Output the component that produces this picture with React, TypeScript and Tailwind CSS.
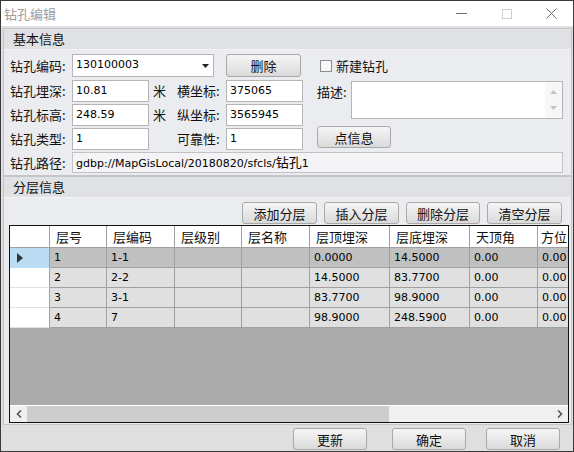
import React from 'react'

const cjk = "font-['Noto_Sans_CJK_SC',sans-serif]"
const lat = "font-['DejaVu_Sans','Noto_Sans_CJK_SC',sans-serif]"

const cols = [57, 68, 67, 68, 80, 80, 68, 80]
const heads = ['层号', '层编码', '层级别', '层名称', '层顶埋深', '层底埋深', '天顶角', '方位']
const rows = [
  ['1', '1-1', '', '', '0.0000', '14.5000', '0.00', '0.00'],
  ['2', '2-2', '', '', '14.5000', '83.7700', '0.00', '0.00'],
  ['3', '3-1', '', '', '83.7700', '98.9000', '0.00', '0.00'],
  ['4', '7', '', '', '98.9000', '248.5900', '0.00', '0.00'],
]

function Btn({ label, className = '' }: { label: string; className?: string }) {
  return (
    <div
      className={`flex shrink-0 items-center justify-center rounded-[3px] border border-[#a9a9a9] bg-linear-to-b from-[#f6f6f6] to-[#dadada] text-[13px] leading-none text-[#111] ${cjk} ${className}`}
    >
      {label}
    </div>
  )
}

function Label({ text, w }: { text: string; w: string }) {
  return <div className={`${w} shrink-0 text-[13px] leading-[22px] text-[#111] ${cjk}`}>{text}</div>
}

function Field({ value, w }: { value: string; w: string }) {
  return (
    <div className={`${w} h-[22px] shrink-0 flex items-center border border-[#b5b5b5] bg-white pl-[3px] text-[11px] text-black ${lat}`}>
      {value}
    </div>
  )
}

function Group({ title, className = '', children }: { title: string; className?: string; children: React.ReactNode }) {
  return (
    <div className={`ml-[2px] mr-[1px] flex flex-col border border-[#c4c5cb] bg-[#ebecef] ${className}`}>
      <div className={`h-[21px] shrink-0 border-b border-[#f4f4f6] bg-[#e0e1e5] pl-[9px] text-[13px] leading-[20px] text-[#111] ${cjk}`}>
        {title}
      </div>
      {children}
    </div>
  )
}

function Chevron({ right = false }: { right?: boolean }) {
  return (
    <svg width="6" height="8" viewBox="0 0 6 8">
      <path d={right ? 'M1 0.5 L4.5 4 L1 7.5' : 'M5 0.5 L1.5 4 L5 7.5'} stroke="#555" strokeWidth="1.6" fill="none" />
    </svg>
  )
}

export default function App() {
  return (
    <div className="flex h-[452px] w-[574px] flex-col overflow-hidden border border-[#3a3a3a] bg-[#dfdfdf]">
      {/* title bar */}
      <div className="flex h-[25px] shrink-0 items-center bg-white">
        <span className={`pl-[3px] text-[13px] leading-none text-[#9c9c9c] ${cjk}`}>钻孔编辑</span>
        <div className="ml-auto flex h-full">
          <div className="flex w-[45px] items-center justify-center">
            <div className="h-px w-[11px] bg-[#6e6e6e]" />
          </div>
          <div className="flex w-[45px] items-center justify-center">
            <div className="h-[10px] w-[10px] border border-[#cfcfcf]" />
          </div>
          <div className="flex w-[44px] items-center justify-center">
            <svg width="11" height="11" viewBox="0 0 11 11">
              <path d="M0.5 0.5 L10.5 10.5 M10.5 0.5 L0.5 10.5" stroke="#6e6e6e" strokeWidth="1" />
            </svg>
          </div>
        </div>
      </div>

      {/* 基本信息 */}
      <Group title="基本信息" className="mt-[2px] shrink-0">
        <div className="flex flex-col pb-[2px] pl-[6px] pr-[8px] pt-[4px]">
          <div className="flex">
            <div className="flex w-[293px] shrink-0 flex-col">
              <div className="flex h-[23px] items-center">
                <Label text="钻孔编码:" w="w-[62px]" />
                <div className={`flex h-[23px] w-[142px] items-center border border-[#b5b5b5] bg-white pl-[3px] text-[11px] text-black ${lat}`}>
                  130100003
                  <svg className="ml-auto mr-[4px]" width="7" height="4" viewBox="0 0 7 4">
                    <path d="M0 0 H7 L3.5 4 Z" fill="#222" />
                  </svg>
                </div>
                <Btn label="删除" className="ml-[12px] h-[23px] w-[75px]" />
              </div>
              <div className="mt-[3px] flex">
                <Label text="钻孔埋深:" w="w-[62px]" />
                <Field value="10.81" w="w-[77px]" />
                <Label text="米" w="ml-[4px] w-[24px]" />
                <Label text="横坐标:" w="w-[49px]" />
                <Field value="375065" w="w-[77px]" />
              </div>
              <div className="mt-[2px] flex">
                <Label text="钻孔标高:" w="w-[62px]" />
                <Field value="248.59" w="w-[77px]" />
                <Label text="米" w="ml-[4px] w-[24px]" />
                <Label text="纵坐标:" w="w-[49px]" />
                <Field value="3565945" w="w-[77px]" />
              </div>
              <div className="mt-[2px] flex">
                <Label text="钻孔类型:" w="w-[62px]" />
                <Field value="1" w="w-[77px]" />
                <div className="ml-[4px] w-[24px]" />
                <Label text="可靠性:" w="w-[49px]" />
                <Field value="1" w="w-[77px]" />
              </div>
            </div>

            <div className="ml-[14px] flex flex-1 flex-col">
              <div className="flex h-[23px] items-center pl-[3px]">
                <div className="h-[12px] w-[12px] border border-[#8c8c8c] bg-[#f7f7f7]" />
                <span className={`ml-[4px] text-[13px] leading-none text-[#111] ${cjk}`}>新建钻孔</span>
              </div>
              <div className="mt-[4px] flex">
                <Label text="描述:" w="w-[34px]" />
                <div className="flex h-[38px] w-[212px] border border-[#b5b5b5] bg-white">
                  <div className="ml-auto flex w-[17px] flex-col items-center justify-between bg-[#f7f7f7] py-[8px]">
                    <svg width="7" height="4" viewBox="0 0 7 4">
                      <path d="M0 4 H7 L3.5 0 Z" fill="#c4c4c4" />
                    </svg>
                    <svg width="7" height="4" viewBox="0 0 7 4">
                      <path d="M0 0 H7 L3.5 4 Z" fill="#c4c4c4" />
                    </svg>
                  </div>
                </div>
              </div>
              <Btn label="点信息" className="mt-[7px] h-[22px] w-[74px]" />
            </div>
          </div>

          <div className="mt-[2px] flex h-[21px]">
            <Label text="钻孔路径:" w="w-[62px]" />
            <div className="flex h-[21px] flex-1 items-center border border-[#c2c2c2] bg-[#f4f4f6] pl-[3px]">
              <span className={`text-[11px] leading-[19px] text-black ${lat}`}>
                gdbp://MapGisLocal/20180820/sfcls/<span className={`text-[13px] ${cjk}`}>钻孔</span>1
              </span>
            </div>
          </div>
        </div>
      </Group>

      {/* 分层信息 */}
      <Group title="分层信息" className="min-h-0 flex-1">
        <div className="flex min-h-0 flex-1 flex-col pb-[1px] pt-[4px]">
          <div className="flex h-[22px] shrink-0 justify-end gap-[7px] pr-[9px]">
            <Btn label="添加分层" className="h-[22px] w-[75px]" />
            <Btn label="插入分层" className="h-[22px] w-[75px]" />
            <Btn label="删除分层" className="h-[22px] w-[74px]" />
            <Btn label="清空分层" className="h-[22px] w-[75px]" />
          </div>

          <div className="ml-[5px] mr-[2px] mt-[1px] flex min-h-0 flex-1 flex-col overflow-hidden border border-[#111]">
            <div className="flex min-h-0 flex-1 flex-col overflow-hidden bg-[#ababab]">
              <div className="flex h-[22px] shrink-0 bg-white">
                <div className="h-full w-[40px] shrink-0 border-b border-r border-[#a0a0a0]" />
                {heads.map((h, i) => (
                  <div
                    key={h}
                    style={{ width: cols[i] }}
                    className={`h-full shrink-0 overflow-hidden whitespace-nowrap border-b border-r border-[#a0a0a0] text-[13px] leading-[21px] text-[#111] ${cjk} ${
                      i === heads.length - 1 ? 'pl-[3px]' : 'pl-[6px]'
                    }`}
                  >
                    {h}
                  </div>
                ))}
              </div>
              {rows.map((r, ri) => (
                <div key={ri} className="flex h-[20px] shrink-0">
                  <div
                    className={`flex h-full w-[40px] shrink-0 items-center border-r border-[#a0a0a0] pl-[7px] ${
                      ri === 0 ? 'border-b border-b-[#bcdcf4] bg-[#bcdcf4]' : 'border-b border-b-[#e2e2e2] bg-white'
                    }`}
                  >
                    {ri === 0 && (
                      <svg width="6" height="10" viewBox="0 0 6 10">
                        <path d="M0 0 L6 5 L0 10 Z" fill="#333" />
                      </svg>
                    )}
                  </div>
                  {r.map((c, ci) => (
                    <div
                      key={ci}
                      style={{ width: cols[ci] }}
                      className={`h-full shrink-0 overflow-hidden whitespace-nowrap border-b border-r border-[#a0a0a0] pl-[4px] text-[11px] leading-[19px] text-black ${lat} ${
                        ri === 0 ? 'bg-[#c0c0c0]' : 'bg-[#e0e0e0]'
                      }`}
                    >
                      {c}
                    </div>
                  ))}
                </div>
              ))}
            </div>
            <div className="flex h-[17px] shrink-0 border-t border-white bg-[#f0f0f0]">
              <div className="flex w-[17px] shrink-0 items-center justify-center">
                <Chevron />
              </div>
              <div className="h-full w-[362px] bg-[#cdcdcd]" />
              <div className="ml-auto flex w-[17px] shrink-0 items-center justify-center">
                <Chevron right />
              </div>
            </div>
          </div>
        </div>
      </Group>

      {/* footer */}
      <div className="flex h-[26px] shrink-0 justify-end pr-[13px] pt-[3px]">
        <Btn label="更新" className="h-[22px] w-[74px]" />
        <Btn label="确定" className="ml-[25px] h-[22px] w-[74px]" />
        <Btn label="取消" className="ml-[20px] h-[22px] w-[74px]" />
      </div>
    </div>
  )
}
